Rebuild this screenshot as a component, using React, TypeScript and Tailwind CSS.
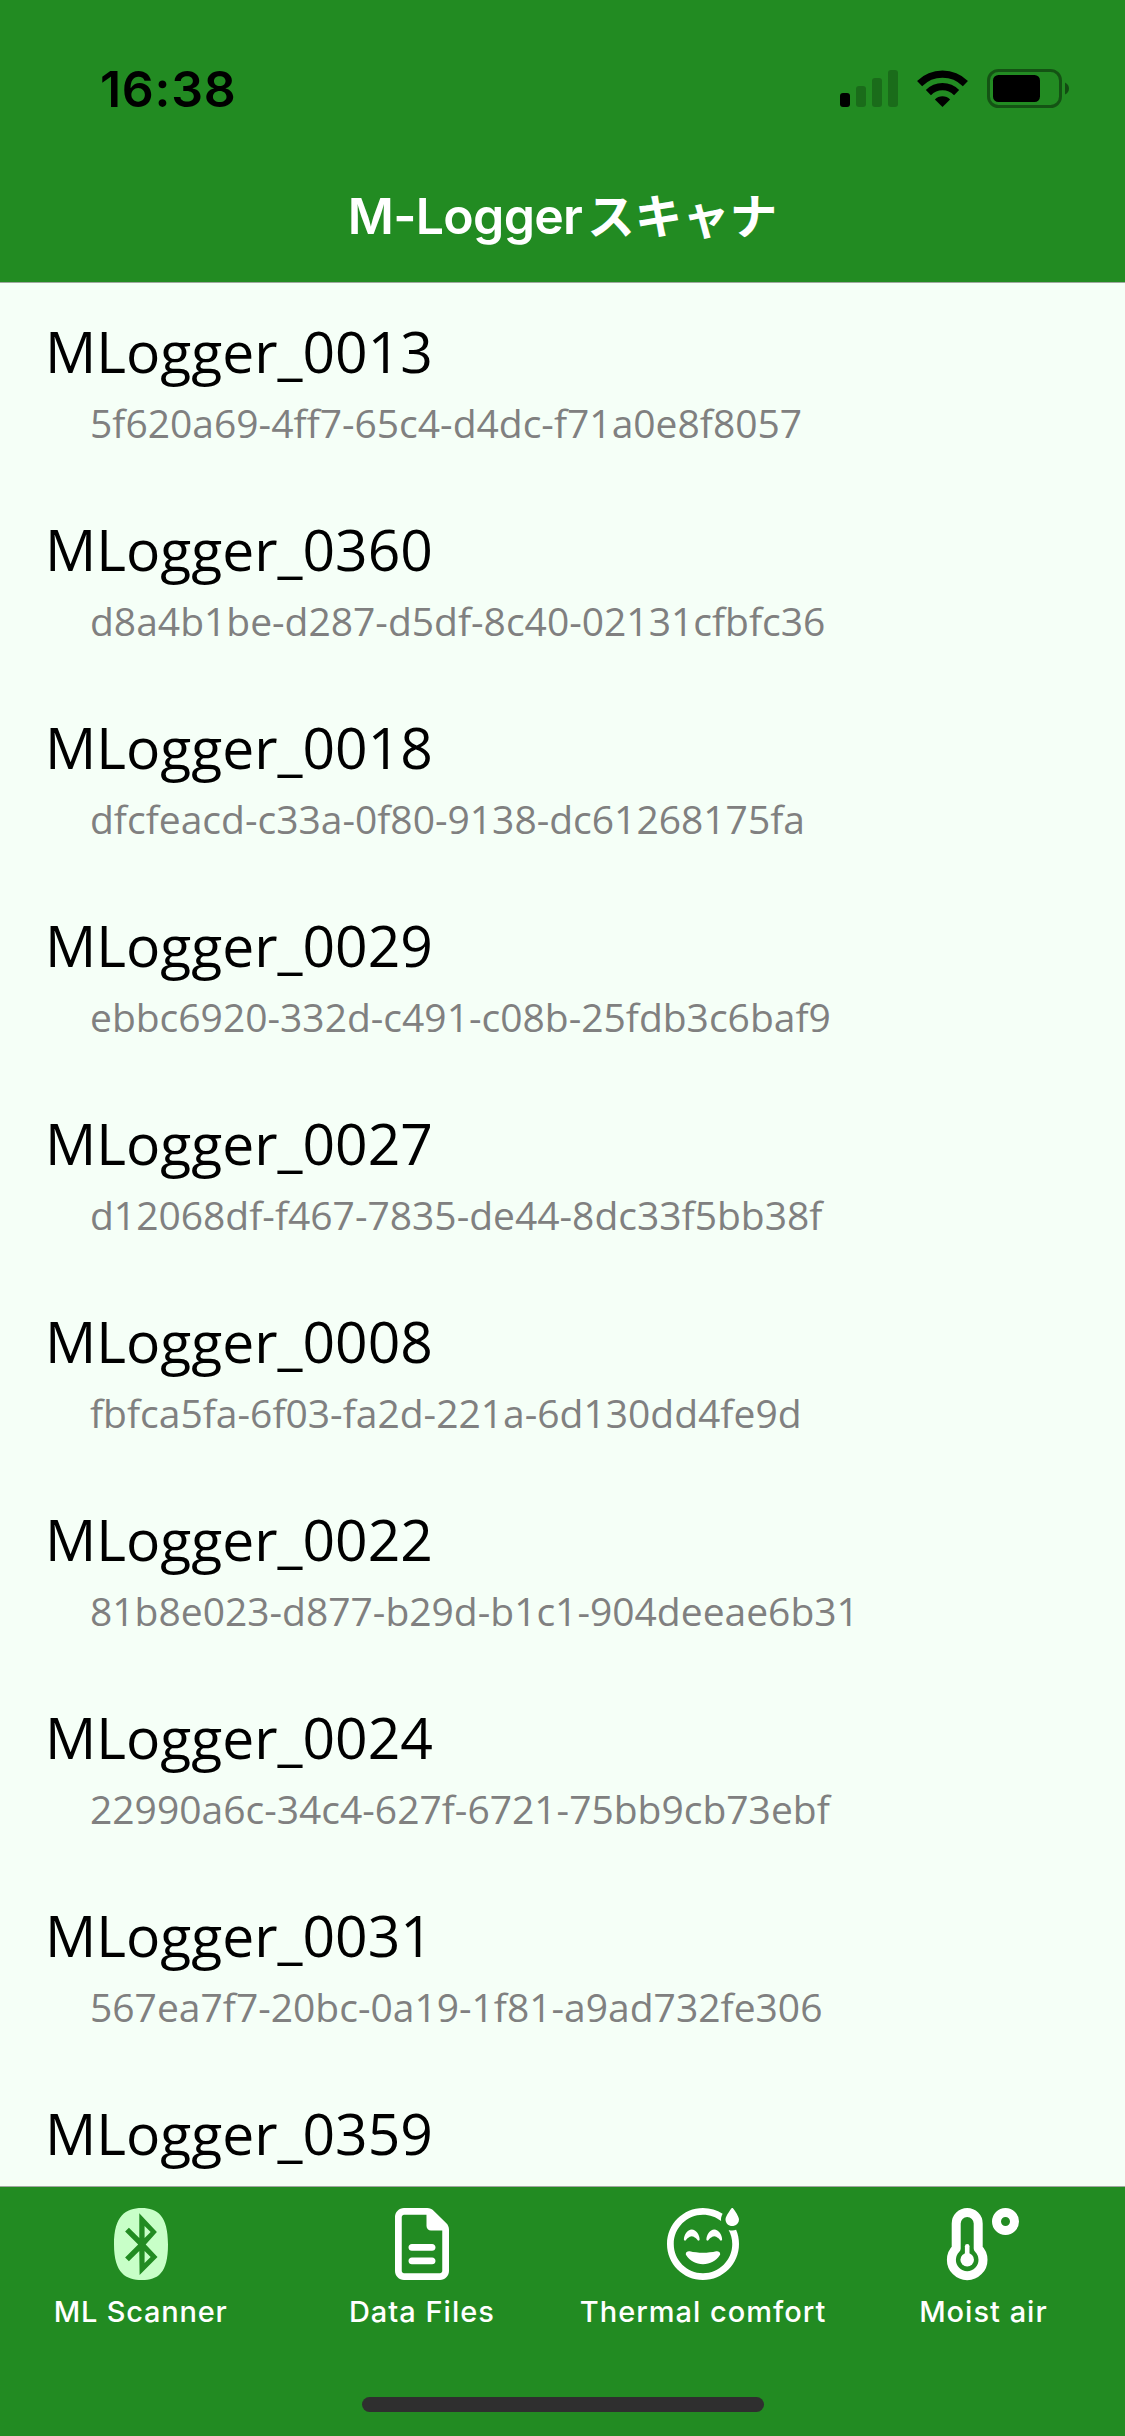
import type { ReactNode } from "react";
import { FaBluetooth, FaRegFaceGrinBeamSweat, FaRegFileLines } from "react-icons/fa6";

interface Device {
    name: string;
    uuid: string;
}

interface TabInfo {
    label: string;
    labelClass: string;
    icon: ReactNode;
}

const devices: Device[] = [
    { name: "MLogger_0013", uuid: "5f620a69-4ff7-65c4-d4dc-f71a0e8f8057" },
    { name: "MLogger_0360", uuid: "d8a4b1be-d287-d5df-8c40-02131cfbfc36" },
    { name: "MLogger_0018", uuid: "dfcfeacd-c33a-0f80-9138-dc61268175fa" },
    { name: "MLogger_0029", uuid: "ebbc6920-332d-c491-c08b-25fdb3c6baf9" },
    { name: "MLogger_0027", uuid: "d12068df-f467-7835-de44-8dc33f5bb38f" },
    { name: "MLogger_0008", uuid: "fbfca5fa-6f03-fa2d-221a-6d130dd4fe9d" },
    { name: "MLogger_0022", uuid: "81b8e023-d877-b29d-b1c1-904deeae6b31" },
    { name: "MLogger_0024", uuid: "22990a6c-34c4-627f-6721-75bb9cb73ebf" },
    { name: "MLogger_0031", uuid: "567ea7f7-20bc-0a19-1f81-a9ad732fe306" },
    { name: "MLogger_0359", uuid: "" },
];

function StatusIcons() {
    return (
        <svg width="230" height="39" viewBox="0 0 230 39">
            {/* Signal */}
            <rect x="0" y="24" width="10" height="14" rx="3" />
            <g opacity="0.22">
                <rect x="16" y="17" width="10" height="21" rx="3" />
                <rect x="32" y="9" width="10" height="29" rx="3" />
                <rect x="48" y="1" width="10" height="37" rx="3" />
            </g>

            {/* Wi-Fi */}
            <g fill="none" stroke="#000" strokeWidth="7.2">
                <path d="M79.6 14.6A32.4 32.4 0 0 1 125.4 14.6" />
                <path d="M88.4 23.6A19.8 19.8 0 0 1 116.6 23.6" />
            </g>
            <path d="M102.5 38L94.9 30.4A10.8 10.8 0 0 1 110.1 30.4Z" />

            {/* Battery */}
            <rect x="148.5" y="1.5" width="72" height="36" rx="10" fill="none" stroke="#000" strokeWidth="3" opacity="0.4" />
            <rect x="153" y="6" width="47" height="27" rx="5.5" />
            <path d="M225 13.5Q229 15.5 229 19.5T225 25.5Z" opacity="0.45" />
        </svg>
    );
}

function ThermometerIcon() {
    return (
        <svg width="72" height="72" viewBox="1 0 72 72" fill="none" stroke="#fff" className="overflow-visible">
            <path
                d="M9.2 15.5a11 11 0 0 1 22 0V40.5a15.8 15.8 0 1 1-22 0Z"
                strokeWidth="9"
                strokeLinejoin="round"
            />
            <path d="M20.2 38.2V52" strokeWidth="4.6" strokeLinecap="round" />
            <circle cx="20.2" cy="51.8" r="6.8" fill="#fff" stroke="none" />
            <circle cx="58.5" cy="13.5" r="9" strokeWidth="9" />
        </svg>
    );
}

const tabs: TabInfo[] = [
    {
        label: "ML Scanner",
        labelClass: "tracking-[0.8px]",
        icon: <FaBluetooth size={72} className="text-[#c8ffc8]" />,
    },
    {
        label: "Data Files",
        labelClass: "tracking-[1px]",
        icon: <FaRegFileLines size={72} />,
    },
    {
        label: "Thermal comfort",
        labelClass: "tracking-[1px]",
        icon: <FaRegFaceGrinBeamSweat size={72} />,
    },
    {
        label: "Moist air",
        labelClass: "mr-[2px] tracking-[1px]",
        icon: <ThermometerIcon />,
    },
];

function DeviceRow({ name, uuid }: Device) {
    return (
        <li className="h-[198px] shrink-0 pl-[45px] pt-[29px] font-['Open_Sans',sans-serif] whitespace-nowrap">
            <p className="text-[57px] leading-[78px] text-black">{name}</p>
            <p className="pl-[45px] text-[39px] leading-[66px] text-[#808080]">{uuid}</p>
        </li>
    );
}

export default function App() {
    return (
        <div className="flex h-[2436px] w-[1125px] flex-col overflow-hidden bg-[#f5fff7] font-[Inter,'Noto_Sans_CJK_JP',sans-serif]">
            <header className="flex h-[283px] shrink-0 flex-col border-b border-[#a0a8a0] bg-[#228b22]">
                <div className="flex h-[177px] items-center justify-between pl-[100px] pr-[55px]">
                    <span className="text-[50px] font-semibold leading-none tracking-[0.7px] text-black">16:38</span>
                    <StatusIcons />
                </div>
                <h1 className="flex h-[78px] items-center justify-center text-[50px] font-semibold leading-none text-white">
                    <span className="tracking-[-0.7px] [font-feature-settings:'calt'_0]">M-Logger</span>
                    <span className="mb-[4px] ml-[5px] font-['Noto_Sans_CJK_JP',sans-serif] text-[47.5px] font-bold">
                        スキャナ
                    </span>
                </h1>
            </header>

            <ul className="flex min-h-0 flex-1 flex-col overflow-hidden">
                {devices.map((device) => (
                    <DeviceRow key={device.name} {...device} />
                ))}
            </ul>

            <nav className="flex h-[250px] shrink-0 flex-col items-center border-t border-[#a0a8a0] bg-[#228b22]">
                <div className="grid w-full flex-1 grid-cols-4 text-white">
                    {tabs.map((tab) => (
                        <div key={tab.label} className="flex flex-col items-center pt-[21px]">
                            {tab.icon}
                            <span className={`mt-[14px] whitespace-nowrap text-[29px] font-[450] leading-[36px] ${tab.labelClass}`}>
                                {tab.label}
                            </span>
                        </div>
                    ))}
                </div>
                <div className="mb-[24px] h-[15px] w-[402px] rounded-full bg-[#2f2f2f]" />
            </nav>
        </div>
    );
}
